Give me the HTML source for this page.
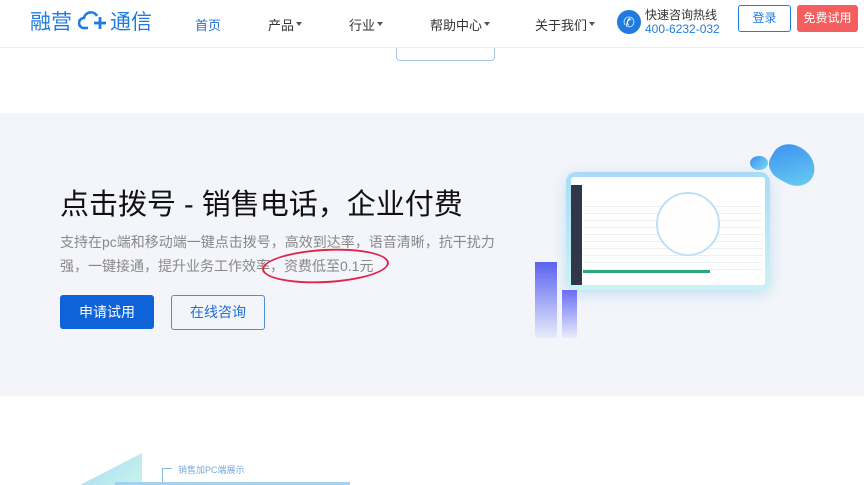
<!DOCTYPE html>
<html><head><meta charset="utf-8"><style>
*{margin:0;padding:0;box-sizing:border-box}
body{width:864px;height:485px;overflow:hidden;background:#fff;font-family:"Liberation Sans","Noto Sans CJK SC",sans-serif;position:relative}
.a{position:absolute}
.hdr{left:0;top:0;width:864px;height:48px;background:#fff;border-bottom:1px solid #eceef2;z-index:2}
.nav{top:15px;font-size:13px;color:#333}
.car::after{content:"";display:inline-block;border:3px solid transparent;border-top:4px solid #555;margin-left:2px;vertical-align:1px}
</style></head><body>
<div class="a hdr">
 <div class="a" style="left:30px;top:6px;font-size:21px;color:#1f7be0">融营</div>
 <svg class="a" style="left:78px;top:9px" width="30" height="22" viewBox="0 0 30 22"><path d="M10 19H6a5 5 0 0 1 0-10 7 7 0 0 1 13-2" fill="none" stroke="#1f7be0" stroke-width="2.6"/><path d="M22 8v12M16 14h12" stroke="#1f7be0" stroke-width="2.8"/></svg>
 <div class="a" style="left:110px;top:6px;font-size:21px;color:#1f7be0">通信</div>
 <div class="a nav" style="left:195px;color:#1f6fd6">首页</div>
 <div class="a nav car" style="left:268px">产品</div>
 <div class="a nav car" style="left:349px">行业</div>
 <div class="a nav car" style="left:430px">帮助中心</div>
 <div class="a nav car" style="left:535px">关于我们</div>
 <div class="a" style="left:617px;top:10px;width:24px;height:24px;border-radius:50%;background:#1f7be0;color:#fff;font-size:14px;text-align:center;line-height:24px">✆</div>
 <div class="a" style="left:645px;top:6px;font-size:12px;color:#333">快速咨询热线</div>
 <div class="a" style="left:645px;top:22px;font-size:12px;color:#1f7be0">400-6232-032</div>
 <div class="a" style="left:738px;top:5px;width:53px;height:27px;border:1px solid #1f7be0;border-radius:3px;color:#1f7be0;font-size:12px;text-align:center;line-height:25px">登录</div>
 <div class="a" style="left:797px;top:5px;width:61px;height:27px;background:#f45e5e;border-radius:3px;color:#fff;font-size:12px;text-align:center;line-height:27px">免费试用</div>
</div>
<div class="a" style="left:396px;top:40px;width:99px;height:21px;border:1px solid #a9c6ea;border-top:none;border-radius:0 0 4px 4px"></div>
<div class="a" style="left:0;top:113px;width:864px;height:283px;background:#f3f5fa"></div>
<div class="a" style="left:60px;top:181px;font-size:29px;color:#111;white-space:nowrap">点击拨号 - 销售电话，企业付费</div>
<div class="a" style="left:60px;top:230px;width:440px;font-size:14px;line-height:24px;color:#888">支持在pc端和移动端一键点击拨号，高效到达率，语音清晰，抗干扰力强，一键接通，提升业务工作效率，资费低至0.1元</div>
<div class="a" style="left:262px;top:249px;width:127px;height:34px;border:2px solid #e0254a;border-radius:50%;transform:rotate(-3deg)"></div>
<div class="a" style="left:60px;top:295px;width:94px;height:34px;background:#0e63d8;border-radius:3px;color:#fff;font-size:14px;text-align:center;line-height:34px">申请试用</div>
<div class="a" style="left:171px;top:295px;width:94px;height:35px;border:1px solid #4d8edc;border-radius:3px;color:#1f6fd6;font-size:14px;text-align:center;line-height:33px">在线咨询</div>
<div class="a" style="left:566px;top:172px;width:204px;height:118px;border-radius:10px;background:linear-gradient(180deg,#a9dbf7,#c9f3f4);box-shadow:0 4px 14px rgba(120,190,230,.4)"></div>
<div class="a" style="left:571px;top:177px;width:194px;height:108px;background:#fff;border-radius:3px"></div>
<div class="a" style="left:571px;top:185px;width:11px;height:100px;background:#2f3848"></div>
<div class="a" style="left:583px;top:200px;width:180px;height:72px;background:repeating-linear-gradient(180deg,#fff 0,#fff 6px,#eef1f4 6px,#eef1f4 7px)"></div>
<div class="a" style="left:583px;top:270px;width:127px;height:3px;background:#2aa87a"></div>
<div class="a" style="left:656px;top:192px;width:64px;height:64px;border-radius:50%;border:2px solid #bfe0f5;background:rgba(255,255,255,.85)"></div>
<div class="a" style="left:535px;top:262px;width:22px;height:76px;background:linear-gradient(180deg,#5a62f0,rgba(190,200,255,.2))"></div>
<div class="a" style="left:562px;top:290px;width:15px;height:48px;background:linear-gradient(180deg,#6a6ef5,rgba(190,200,255,.2))"></div>
<div class="a" style="left:770px;top:146px;width:46px;height:38px;border-radius:50% 60% 50% 40%;background:linear-gradient(135deg,#3a8ef0,#6ad0f0);transform:rotate(30deg)"></div>
<div class="a" style="left:750px;top:156px;width:18px;height:14px;border-radius:50%;background:linear-gradient(135deg,#3a8ef0,#7adcf0)"></div>
<div class="a" style="left:80px;top:453px;width:62px;height:32px;background:linear-gradient(135deg,#a6daf7,#c9f3ea);clip-path:polygon(100% 0,100% 100%,0 100%)"></div>
<div class="a" style="left:162px;top:468px;width:10px;height:17px;border-left:1px solid #8ab8e6;border-top:1px solid #8ab8e6"></div>
<div class="a" style="left:178px;top:463px;font-size:9px;color:#7aa8d8">销售加PC端展示</div>
<div class="a" style="left:115px;top:482px;width:235px;height:3px;background:#9fd2f3"></div>
</body></html>
